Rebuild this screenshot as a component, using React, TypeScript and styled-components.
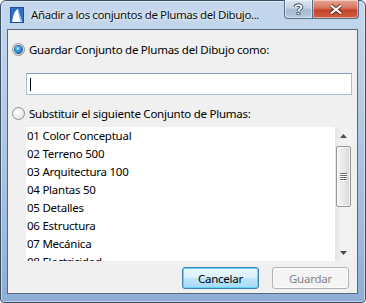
import { createGlobalStyle } from "styled-components";
import styled from "styled-components";

const GlobalStyle = createGlobalStyle`
  html, body {
    margin: 0;
    padding: 0;
    background: #ffffff;
  }
  body {
    font-family: "Segoe UI", "Noto Sans", "Open Sans", sans-serif;
    font-size: 11.5px;
    letter-spacing: -0.25px;
  }
`;

const conjuntos = [
  "01 Color Conceptual",
  "02 Terreno 500",
  "03 Arquitectura 100",
  "04 Plantas 50",
  "05 Detalles",
  "06 Estructura",
  "07 Mecánica",
  "08 Electricidad",
];

const Window = styled.div`
  box-sizing: border-box;
  width: 366px;
  height: 303px;
  border: 1px solid #3d4e63;
  border-radius: 6px 6px 4px 4px;
  background: linear-gradient(180deg, #c4d7ec 0%, #b7cde6 30%, #9fbbde 75%, #8eaed6 100%);
  display: flex;
  flex-direction: column;
  padding: 0 7px 8px 6px;
  box-shadow: inset 0 0 0 1px rgba(255, 255, 255, 0.45);
`;

const TitleBar = styled.div`
  height: 28px;
  display: flex;
  align-items: flex-start;
`;

const AppIcon = styled.svg`
  margin: 6px 0 0 3px;
  flex-shrink: 0;
`;

const Title = styled.div`
  margin: 6px 0 0 7px;
  color: #0c0c0c;
  font-size: 11.5px;
  letter-spacing: -0.4px;
  line-height: 16px;
  white-space: nowrap;
  text-shadow: 0 0 6px rgba(255, 255, 255, 0.95), 0 0 2px rgba(255, 255, 255, 0.9);
  flex: 1;
`;

const CaptionButtons = styled.div`
  display: flex;
  margin-top: -1px;
  margin-right: -1px;
`;

const CaptionButton = styled.div<{ $close?: boolean }>`
  box-sizing: border-box;
  height: 19px;
  width: ${(p) => (p.$close ? "46px" : "29px")};
  border: 1px solid #5b6d85;
  border-top: none;
  border-left: ${(p) => (p.$close ? "none" : "1px solid #5b6d85")};
  border-radius: ${(p) => (p.$close ? "0 0 4px 0" : "0 0 0 4px")};
  background: ${(p) =>
    p.$close
      ? "linear-gradient(180deg, #e8a493 0%, #d8765f 45%, #c4432a 55%, #d0603f 100%)"
      : "linear-gradient(180deg, #dce6f1 0%, #c3d2e3 45%, #a6b9cf 55%, #b9cbe0 100%)"};
  box-shadow: inset 0 0 0 1px rgba(255, 255, 255, 0.45);
  display: flex;
  align-items: center;
  justify-content: center;
`;

const Client = styled.div`
  flex: 1;
  border: 1px solid #56677f;
  background: #f0f0f0;
  display: flex;
  flex-direction: column;
  padding: 0 4px;
`;

const RadioRow = styled.label<{ $top: number }>`
  display: flex;
  align-items: center;
  gap: 4px;
  height: 13px;
  margin-top: ${(p) => p.$top}px;
  color: #000;
  white-space: nowrap;
`;

const Radio = styled.span<{ $checked?: boolean }>`
  box-sizing: border-box;
  width: 13px;
  height: 13px;
  border-radius: 50%;
  border: 1px solid #8e8f8f;
  background: radial-gradient(circle at 40% 35%, #ffffff 0%, #eeeeee 55%, #d0d0d0 100%);
  display: flex;
  align-items: center;
  justify-content: center;
  flex-shrink: 0;

  &::after {
    content: "";
    display: ${(p) => (p.$checked ? "block" : "none")};
    width: 7px;
    height: 7px;
    border-radius: 50%;
    background: radial-gradient(circle at 40% 35%, #aee6ff 0%, #2a8fd6 45%, #0a4f93 100%);
    box-shadow: 0 0 0 1px #1b5b91;
  }
`;

const TextBox = styled.div`
  box-sizing: border-box;
  margin: 17px 0 0 14px;
  width: 326px;
  height: 22px;
  background: #ffffff;
  border: 1px solid #aac0d8;
  border-top-color: #7b9ec4;
  display: flex;
  align-items: center;
  padding-left: 3px;
`;

const Caret = styled.span`
  width: 1px;
  height: 13px;
  background: #000;
`;

const ListBox = styled.div`
  margin: 7px 0 0 14px;
  width: 326px;
  height: 134px;
  background: #ffffff;
  display: flex;
  overflow: hidden;
`;

const Items = styled.div`
  flex: 1;
  padding-left: 1px;
`;

const Item = styled.div`
  height: 18px;
  line-height: 18px;
  color: #000;
  white-space: nowrap;
`;

const ScrollBar = styled.div`
  width: 17px;
  background: linear-gradient(90deg, #e4e4e4 0%, #f2f2f2 40%, #f2f2f2 100%);
  display: flex;
  flex-direction: column;
  align-items: center;
`;

const ArrowBox = styled.div`
  height: 17px;
  width: 17px;
  display: flex;
  align-items: center;
  justify-content: center;
`;

const Thumb = styled.div`
  box-sizing: border-box;
  margin-top: 2px;
  width: 15px;
  height: 61px;
  border: 1px solid #959595;
  border-radius: 2px;
  background: linear-gradient(90deg, #f3f3f3 0%, #e9e9e9 50%, #d6d6d6 100%);
  box-shadow: inset 0 0 0 1px rgba(255, 255, 255, 0.7);
  display: flex;
  flex-direction: column;
  align-items: center;
  justify-content: center;
  gap: 1px;
`;

const Grip = styled.span`
  width: 7px;
  height: 1px;
  background: #6f6f6f;
  box-shadow: 0 1px 0 #fff;
`;

const Track = styled.div`
  flex: 1;
`;

const ButtonRow = styled.div`
  display: flex;
  justify-content: flex-end;
  gap: 13px;
  margin: 6px 4px 0 0;
`;

const Button = styled.div<{ $default?: boolean; $disabled?: boolean }>`
  box-sizing: border-box;
  width: 77px;
  height: 22px;
  border-radius: 3px;
  border: 1px solid ${(p) => (p.$default ? "#3c7fb1" : "#adb2b5")};
  background: ${(p) =>
    p.$disabled
      ? "#f4f4f4"
      : "linear-gradient(180deg, #eaf6fd 0%, #d9f0fc 50%, #bee6fd 51%, #a7d9f5 100%)"};
  box-shadow: ${(p) => (p.$default ? "inset 0 0 0 1px #5cd7f8" : "inset 0 0 0 1px #fcfcfc")};
  color: ${(p) => (p.$disabled ? "#838383" : "#000")};
  display: flex;
  align-items: center;
  justify-content: center;
`;

export default function App() {
  return (
    <>
      <GlobalStyle />
      <Window>
        <TitleBar>
          <AppIcon width="14" height="16" viewBox="0 0 14 16">
            <rect x="0.5" y="0.5" width="13" height="15" fill="#2f6fc4" stroke="#1c4f95" />
            <path d="M2 15 C3 8 5 3 8 2 C9 6 11 11 12 15 Z" fill="#ffffff" />
            <path d="M8 2 C9 7 10 11 11 15" stroke="#7fb2ea" fill="none" />
          </AppIcon>
          <Title>Añadir a los conjuntos de Plumas del Dibujo...</Title>
          <CaptionButtons>
            <CaptionButton>
              <svg width="11" height="12" viewBox="0 0 11 12">
                <path
                  d="M2.5 4 C2.5 1.5 8.5 1.5 8.5 4 C8.5 6 5.5 6 5.5 8"
                  stroke="#3c4b5f"
                  strokeWidth="3.6"
                  fill="none"
                />
                <path
                  d="M2.5 4 C2.5 1.5 8.5 1.5 8.5 4 C8.5 6 5.5 6 5.5 8"
                  stroke="#ffffff"
                  strokeWidth="1.8"
                  fill="none"
                />
                <rect x="3.6" y="9.2" width="3.8" height="2.8" fill="#3c4b5f" />
                <rect x="4.5" y="9.9" width="2" height="1.5" fill="#ffffff" />
              </svg>
            </CaptionButton>
            <CaptionButton $close>
              <svg width="14" height="11" viewBox="0 0 14 11">
                <path d="M2 1.5 L12 9.5 M12 1.5 L2 9.5" stroke="#5a2a22" strokeWidth="4" />
                <path d="M2 1.5 L12 9.5 M12 1.5 L2 9.5" stroke="#ffffff" strokeWidth="2.2" />
              </svg>
            </CaptionButton>
          </CaptionButtons>
        </TitleBar>
        <Client>
          <RadioRow $top={13}>
            <Radio $checked />
            Guardar Conjunto de Plumas del Dibujo como:
          </RadioRow>
          <TextBox>
            <Caret />
          </TextBox>
          <RadioRow $top={12}>
            <Radio />
            Substituir el siguiente Conjunto de Plumas:
          </RadioRow>
          <ListBox>
            <Items>
              {conjuntos.map((c) => (
                <Item key={c}>{c}</Item>
              ))}
            </Items>
            <ScrollBar>
              <ArrowBox>
                <svg width="7" height="4" viewBox="0 0 7 4">
                  <path d="M0 4 L3.5 0 L7 4 Z" fill="#4d4d4d" />
                </svg>
              </ArrowBox>
              <Thumb>
                <Grip />
                <Grip />
                <Grip />
                <Grip />
              </Thumb>
              <Track />
              <ArrowBox>
                <svg width="7" height="4" viewBox="0 0 7 4">
                  <path d="M0 0 L7 0 L3.5 4 Z" fill="#4d4d4d" />
                </svg>
              </ArrowBox>
            </ScrollBar>
          </ListBox>
          <ButtonRow>
            <Button $default>Cancelar</Button>
            <Button $disabled>Guardar</Button>
          </ButtonRow>
        </Client>
      </Window>
    </>
  );
}
